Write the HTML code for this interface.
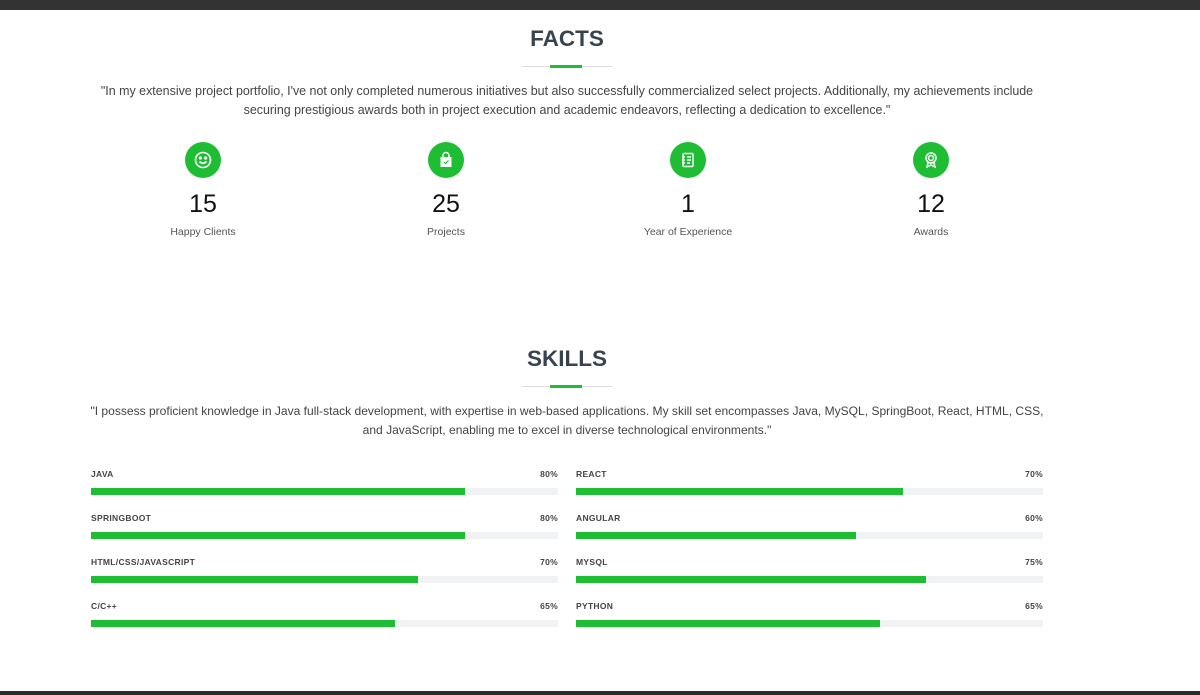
<!DOCTYPE html>
<html><head><meta charset="utf-8"><style>
*{margin:0;padding:0;box-sizing:border-box}
body{width:1200px;height:695px;background:#fff;position:relative;overflow:hidden;font-family:"Liberation Sans",sans-serif;color:#444}
.top{position:absolute;left:0;top:0;width:1200px;height:10px;background:#333}
.bot{position:absolute;left:0;top:691px;width:1200px;height:4px;background:#2a2a2a}
h2{position:absolute;left:0;width:1134px;text-align:center;font-size:22.5px;font-weight:bold;color:#37434f}
.div{position:absolute;left:522px;width:90px;height:1px;background:#ddd}
.div i{position:absolute;left:28px;top:-1px;width:32px;height:3px;background:#1ebd34}
p.q{position:absolute;left:17px;width:1100px;text-align:center;font-size:12.2px;line-height:18.5px;color:#444;white-space:nowrap}
.fact{position:absolute;top:142px;width:200px;margin-left:-100px;text-align:center}
.ic{width:36px;height:36px;border-radius:50%;background:#1ebd34;margin:0 auto;display:flex;align-items:center;justify-content:center}
.num{font-size:25px;color:#111;margin-top:12px;line-height:28px}
.lbl{font-size:10.5px;color:#555;margin-top:8px}
.sk{position:absolute;width:467px}
.sk .n{font-size:8.5px;font-weight:bold;color:#444;display:flex;justify-content:space-between;height:14px;letter-spacing:.3px}
.sk .b{margin-top:5px;height:7px;background:#f1f2f4}
.sk .b i{display:block;height:7px;background:#1ebd34}
</style></head><body>
<div class="top"></div>
<h2 style="top:26px">FACTS</h2>
<div class="div" style="top:66px"><i></i></div>
<p class="q" style="top:82px;font-size:12.45px">"In my extensive project portfolio, I've not only completed numerous initiatives but also successfully commercialized select projects. Additionally, my achievements include<br>securing prestigious awards both in project execution and academic endeavors, reflecting a dedication to excellence."</p>

<div class="fact" style="left:203px"><div class="ic"><svg width="20" height="20" viewBox="0 0 20 20" fill="none" stroke="#fff" stroke-width="1.6"><circle cx="10" cy="10" r="7.5"/><circle cx="7.3" cy="8" r=".8" fill="#fff"/><circle cx="12.7" cy="8" r=".8" fill="#fff"/><path d="M6.5 11.5q3.5 3.5 7 0"/></svg></div><div class="num">15</div><div class="lbl">Happy Clients</div></div>
<div class="fact" style="left:446px"><div class="ic"><svg width="20" height="20" viewBox="0 0 20 20"><path d="M7 7V5.5a3 3 0 0 1 6 0V7" fill="none" stroke="#fff" stroke-width="1.5"/><rect x="4.5" y="7" width="11" height="10" fill="#fff"/><path d="M8 12l1.5 1.5 3-3" stroke="#1ebd34" stroke-width="1.2" fill="none"/></svg></div><div class="num">25</div><div class="lbl">Projects</div></div>
<div class="fact" style="left:688px"><div class="ic"><svg width="20" height="20" viewBox="0 0 20 20" fill="none" stroke="#fff" stroke-width="1.4"><rect x="5" y="3.5" width="10" height="13" rx="1"/><path d="M4 7h3M4 10h3M4 13h3M9 7h4M9 10h4M9 13h3"/></svg></div><div class="num">1</div><div class="lbl">Year of Experience</div></div>
<div class="fact" style="left:931px"><div class="ic"><svg width="20" height="20" viewBox="0 0 20 20" fill="none" stroke="#fff" stroke-width="1.5"><circle cx="10" cy="8" r="5"/><circle cx="10" cy="8" r="2.5"/><path d="M7 12.5l-1 4.5 4-2 4 2-1-4.5"/></svg></div><div class="num">12</div><div class="lbl">Awards</div></div>

<h2 style="top:346px">SKILLS</h2>
<div class="div" style="top:386px"><i></i></div>
<p class="q" style="top:402px;font-size:12.05px">"I possess proficient knowledge in Java full-stack development, with expertise in web-based applications. My skill set encompasses Java, MySQL, SpringBoot, React, HTML, CSS,<br>and JavaScript, enabling me to excel in diverse technological environments."</p>

<div class="sk" style="left:91px;top:469px"><div class="n"><span>JAVA</span><span>80%</span></div><div class="b"><i style="width:80%"></i></div></div>
<div class="sk" style="left:91px;top:513px"><div class="n"><span>SPRINGBOOT</span><span>80%</span></div><div class="b"><i style="width:80%"></i></div></div>
<div class="sk" style="left:91px;top:557px"><div class="n"><span>HTML/CSS/JAVASCRIPT</span><span>70%</span></div><div class="b"><i style="width:70%"></i></div></div>
<div class="sk" style="left:91px;top:601px"><div class="n"><span>C/C++</span><span>65%</span></div><div class="b"><i style="width:65%"></i></div></div>
<div class="sk" style="left:576px;top:469px"><div class="n"><span>REACT</span><span>70%</span></div><div class="b"><i style="width:70%"></i></div></div>
<div class="sk" style="left:576px;top:513px"><div class="n"><span>ANGULAR</span><span>60%</span></div><div class="b"><i style="width:60%"></i></div></div>
<div class="sk" style="left:576px;top:557px"><div class="n"><span>MYSQL</span><span>75%</span></div><div class="b"><i style="width:75%"></i></div></div>
<div class="sk" style="left:576px;top:601px"><div class="n"><span>PYTHON</span><span>65%</span></div><div class="b"><i style="width:65%"></i></div></div>
<div class="bot"></div>
</body></html>
